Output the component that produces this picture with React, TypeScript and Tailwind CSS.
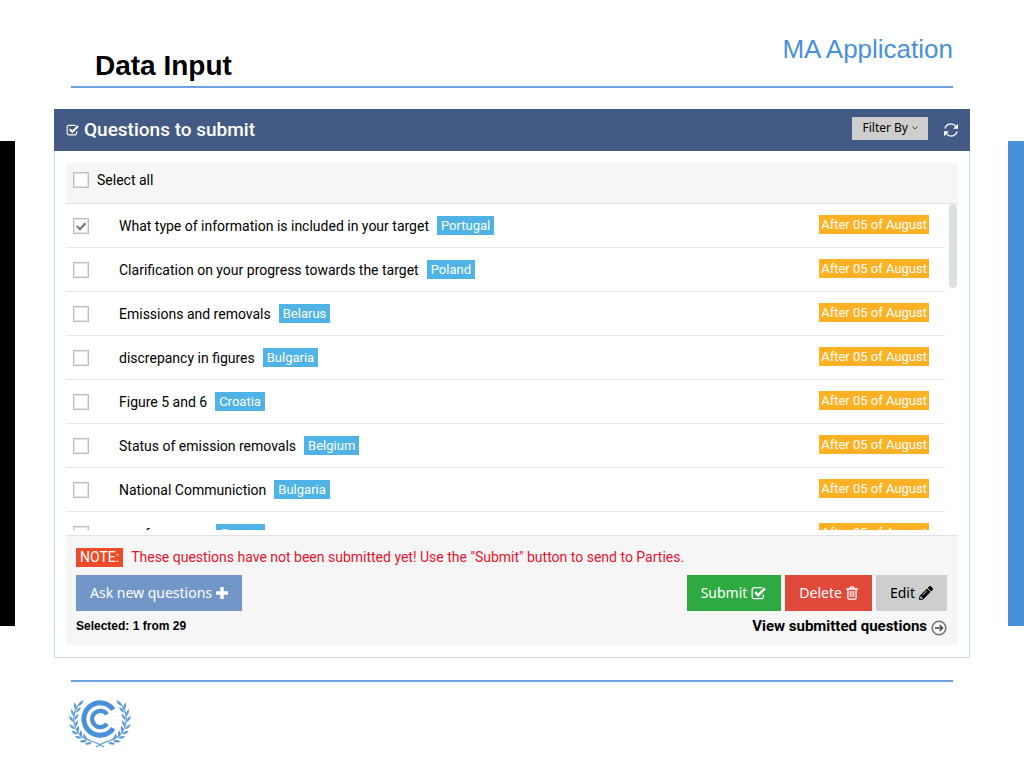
import { useState } from 'react';
import type { ReactNode } from 'react';
import { FaPencilAlt } from 'react-icons/fa';

const questions = [
  { id: 1, text: 'What type of information is included in your target', country: 'Portugal' },
  { id: 2, text: 'Clarification on your progress towards the target', country: 'Poland' },
  { id: 3, text: 'Emissions and removals', country: 'Belarus' },
  { id: 4, text: 'discrepancy in figures', country: 'Bulgaria' },
  { id: 5, text: 'Figure 5 and 6', country: 'Croatia' },
  { id: 6, text: 'Status of emission removals', country: 'Belgium' },
  { id: 7, text: 'National Communiction', country: 'Bulgaria' },
  { id: 8, text: 'use for course', country: 'Greece' },
];

const TOTAL = 29;

const CheckSquareIcon = ({ className }: { className: string }) => (
  <svg viewBox="0 0 16 14" className={className} fill="none" stroke="currentColor" aria-hidden="true">
    <path d="M12.3 8.5v2.2a2 2 0 0 1-2 2H3.2a2 2 0 0 1-2-2V3.6a2 2 0 0 1 2-2h7.1q.5 0 1 .2" strokeWidth="1.3" />
    <path d="M4.2 6.2l3 3 6.8-6.8" strokeWidth="2.4" />
  </svg>
);

const PlusIcon = () => (
  <svg viewBox="0 0 12 12" className="size-3" fill="currentColor" aria-hidden="true">
    <path d="M4.3 0h3.4v4.3H12v3.4H7.7V12H4.3V7.7H0V4.3h4.3z" />
  </svg>
);

const RefreshIcon = () => (
  <svg viewBox="0 0 16 16" className="size-4" fill="none" stroke="#dfe8f5" strokeWidth="1.5" aria-hidden="true">
    <path d="M2 6.5A6.2 6.2 0 0 1 13 4.6M14 9.5A6.2 6.2 0 0 1 3 11.4" />
    <path d="M15 1.8v5h-5zM1 14.2v-5h5z" fill="#fff" stroke="none" />
  </svg>
);

const TrashIcon = () => (
  <svg viewBox="0 0 12 14" className="h-3.5 w-3" fill="none" stroke="currentColor" aria-hidden="true">
    <path d="M.3 3h11.4M3.8 3l.6-1.8h3.2L8.2 3M1.9 3v8.8q0 1.3 1.1 1.3h6q1.1 0 1.1-1.3V3" strokeWidth="1.3" />
    <path d="M4.2 5v6M6 5v6M7.8 5v6" strokeWidth="1" />
  </svg>
);

const ArrowCircleIcon = () => (
  <svg viewBox="0 0 16 16" className="mt-1 size-4 text-[#777]" fill="none" stroke="currentColor" aria-hidden="true">
    <circle cx="8" cy="8" r="6.8" strokeWidth="1.6" />
    <path d="M4 8h7.4M8.6 5l3 3-3 3" stroke="#444" strokeWidth="1.3" />
  </svg>
);

// x, y, rotation of every leaf on the left branch; the right one is mirrored
const leaves = [
  [11, 8, -52], [8, 12, -100],
  [8, 15, -50], [6, 18, -112],
  [6.5, 22, -56], [5.5, 24, -125],
  [7, 29, -66], [7, 31, -140],
  [9.5, 35, -80], [10, 36, -155],
  [13.5, 39.5, -96], [14, 40, -168],
  [18.5, 42.5, -112], [19, 43, -182],
  [24, 44.5, -192],
];

const Branch = () => (
  <g fill="#5a9bd5">
    <path d="M13 4C3 14 4 27 12 37c6 6 14 5 24 12" fill="none" stroke="#5a9bd5" strokeWidth="1.2" />
    {leaves.map(([x, y, r]) => (
      <path key={`${x}-${y}`} d="M0 0Q3.5-2.8 7.5 0Q3.5 2 0 0" transform={`translate(${x} ${y}) rotate(${r})`} />
    ))}
  </g>
);

const Emblem = () => (
  <svg viewBox="0 0 64 52" className="h-[52px] w-16" role="img" aria-label="Emblem">
    <Branch />
    <g transform="translate(64 0) scale(-1 1)">
      <Branch />
    </g>
    <g fill="none" stroke="#4a90d9">
      <path d="M45.3 11.6A16.2 16.2 0 1 0 45.3 30.4" strokeWidth="5" />
      <path d="M39 16.2A8.2 8.2 0 1 0 39 25.8" strokeWidth="4.2" />
    </g>
  </svg>
);

type CheckboxProps = { id: string; checked: boolean; onChange: () => void };

const Checkbox = ({ id, checked, onChange }: CheckboxProps) => (
  <span className="relative size-4 shrink-0">
    <input
      id={id}
      type="checkbox"
      checked={checked}
      onChange={onChange}
      className="block size-4 appearance-none border border-[#bdbdbd] bg-white outline outline-1 -outline-offset-2 outline-[#e4e4e4]"
    />
    {checked && (
      <svg viewBox="0 0 16 16" className="pointer-events-none absolute inset-0 size-4" fill="none" aria-hidden="true">
        <path d="M3.8 8l3.2 3.2 5.5-6" stroke="#777" strokeWidth="2.2" />
      </svg>
    )}
  </span>
);

const Action = ({ className, children }: { className: string; children: ReactNode }) => (
  <button type="button" className={`flex h-9 items-center gap-1 px-3.5 font-['Noto_Sans',sans-serif] text-sm ${className}`}>
    {children}
  </button>
);

export default function App() {
  const [selected, setSelected] = useState<number[]>([1]);
  const allSelected = selected.length === questions.length;

  const toggle = (id: number) =>
    setSelected((prev) => (prev.includes(id) ? prev.filter((x) => x !== id) : [...prev, id]));

  return (
    <div className="flex min-h-screen bg-white font-['Roboto',sans-serif] text-black">
      <div className="mt-[141px] h-[485px] w-[15px] shrink-0 bg-black" />

      <main className="min-w-0 flex-1 pr-[38px] pl-[39px]">
        {/* Slide title */}
        <header className="mx-[17px] flex h-[88px] justify-between border-b-2 border-[#6ba3e0] pl-6 font-['Liberation_Sans',Arial,sans-serif]">
          <h1 className="pt-[50px] text-[28px] leading-8 font-bold">Data Input</h1>
          <p className="pt-[33px] text-[26px] leading-8 text-[#4a90d9]">MA Application</p>
        </header>

        {/* Panel */}
        <section className="mt-[21px] border border-[#c3d6ee]">
          <div className="-mx-px -mt-px flex h-[42px] items-center bg-[#435a84] pr-[11px] pl-3 text-white">
            <CheckSquareIcon className="h-3 w-[14px]" />
            <h2 className="ml-1 text-[19px] font-medium">Questions to submit</h2>
            <button
              type="button"
              className="mb-1 ml-auto flex h-[23px] items-center gap-1 bg-[#cecece] px-2.5 font-['Noto_Sans',sans-serif] text-xs text-black"
            >
              Filter By
              <svg viewBox="0 0 6 4" className="h-1 w-1.5" fill="none" stroke="#444" aria-hidden="true">
                <path d="M.5.5L3 3 5.5.5" />
              </svg>
            </button>
            <button type="button" aria-label="Refresh" className="ml-[15px]">
              <RefreshIcon />
            </button>
          </div>

          <div className="px-[11px] pt-3 pb-3">
            <div className="flex h-[41px] items-center border-b border-[#e2e2e2] bg-[#f6f6f6] px-[7px] pb-1.5">
              <Checkbox
                id="select-all"
                checked={allSelected}
                onChange={() => setSelected(allSelected ? [] : questions.map((q) => q.id))}
              />
              <label htmlFor="select-all" className="pl-2 text-sm">Select all</label>
            </div>

            <div className="flex h-[326px] overflow-hidden">
              <ul className="min-w-0 flex-1">
                {questions.map((q) => (
                  <li key={q.id} className="flex h-11 items-center border-b border-[#e8e8e8] pr-4 pl-[7px]">
                    <Checkbox id={`q-${q.id}`} checked={selected.includes(q.id)} onChange={() => toggle(q.id)} />
                    <label htmlFor={`q-${q.id}`} className="pl-[30px] text-sm">{q.text}</label>
                    <span className="ml-2 bg-[#4fb3e5] px-1 text-[13px] leading-[19px] text-white">{q.country}</span>
                    <span className="mb-0.5 ml-auto bg-[#ffb124] px-0.5 text-[13px] leading-[19px] text-white">
                      After 05 of August
                    </span>
                  </li>
                ))}
              </ul>
              <div className="mr-px ml-1 h-[84px] w-2 rounded-full bg-[#dde0e3]" />
            </div>

            <footer className="mt-[5px] border-t border-[#e2e2e2] bg-[#f6f6f6] pt-[11px] pr-[11px] pb-2 pl-2.5">
              <p className="flex items-center gap-2 text-sm text-[#e8132f]">
                <span className="bg-[#ee4b2b] px-1 leading-[19px] text-white">NOTE:</span>
                These questions have not been submitted yet! Use the "Submit" button to send to Parties.
              </p>
              <div className="mt-2 flex gap-1">
                <Action className="mr-auto bg-[#7396c8] text-white">
                  Ask new questions <PlusIcon />
                </Action>
                <Action className="bg-[#2faa42] text-white">
                  Submit <CheckSquareIcon className="h-3.5 w-4" />
                </Action>
                <Action className="bg-[#df4a3a] text-white">
                  Delete <TrashIcon />
                </Action>
                <Action className="bg-[#cecece] text-black">
                  Edit <FaPencilAlt className="size-3.5" />
                </Action>
              </div>
              <div className="mt-1 flex items-center justify-between">
                <p className="font-['Liberation_Sans',Arial,sans-serif] text-xs font-bold">
                  Selected: {selected.length} from {TOTAL}
                </p>
                <a href="#submitted" className="flex items-center gap-1 text-[15px] leading-[22px] font-bold">
                  View submitted questions <ArrowCircleIcon />
                </a>
              </div>
            </footer>
          </div>
        </section>

        <div className="mx-[17px] mt-[22px] h-0.5 bg-[#6ba3e0]" />
        <div className="mt-4 pl-3.5">
          <Emblem />
        </div>
      </main>

      <div className="mt-[141px] h-[485px] w-4 shrink-0 bg-[#4a90d9]" />
    </div>
  );
}
